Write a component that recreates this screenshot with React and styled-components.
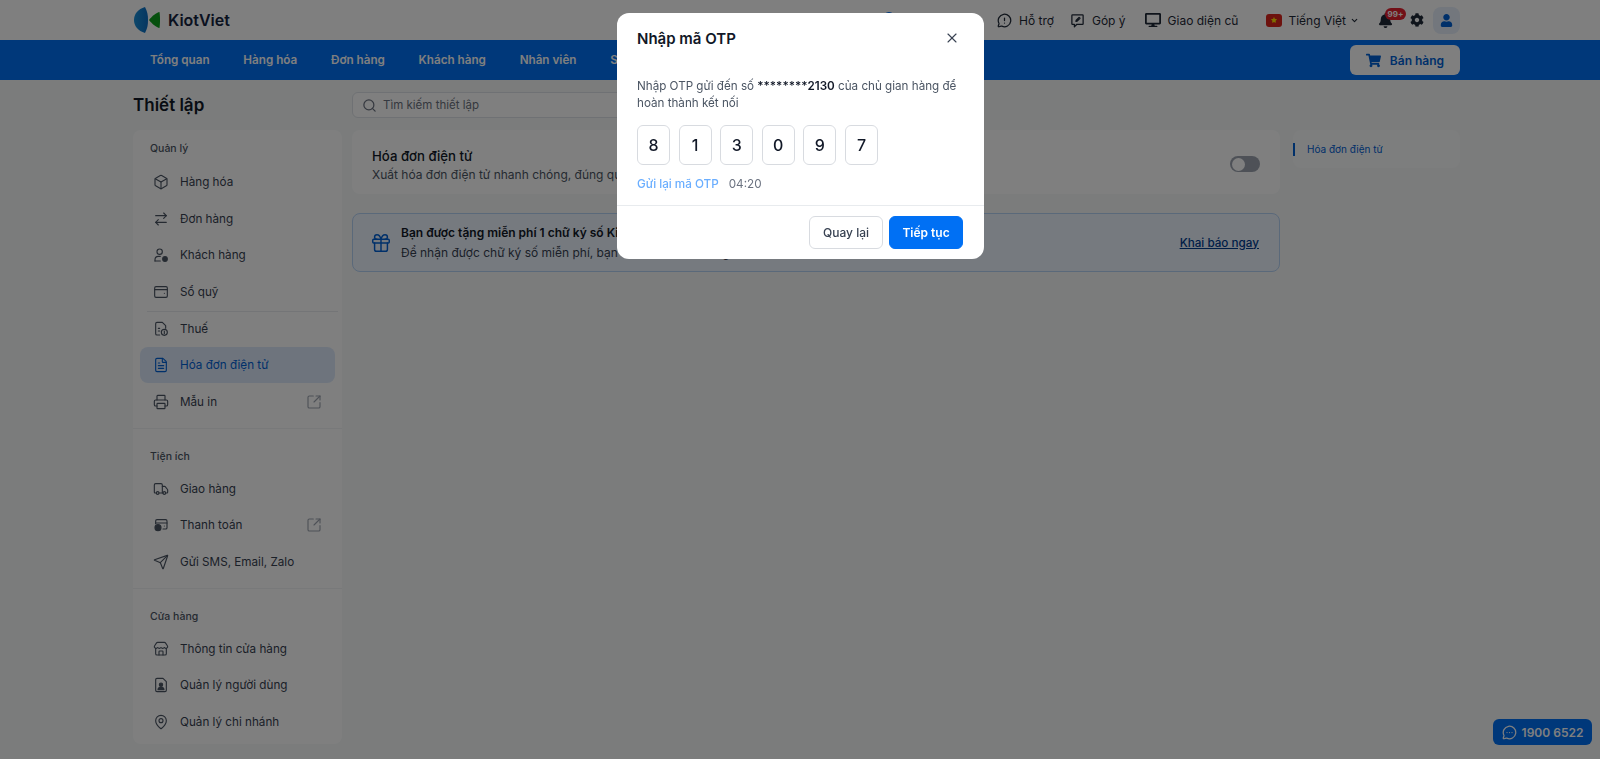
import styled, { createGlobalStyle } from "styled-components";
import {
  Box, ArrowRightLeft, FileText, Printer,
  SquareArrowOutUpRight, Truck, Send, Store, MapPin,
  Search, Gift, X, MessageCircleWarning, ChevronDown, MessageCircleMore,
} from "lucide-react";
import { FaBell, FaCog, FaUser, FaShoppingCart, FaDesktop, FaStar } from "react-icons/fa";

const GlobalStyle = createGlobalStyle`
  html, body { margin: 0; padding: 0; background: #f6f9f9; }
  * { box-sizing: border-box; }
  body { font-family: Inter, "Noto Sans", "Liberation Sans", sans-serif; color: #1f2937; }
`;

const Page = styled.div`
  height: 759px;
  overflow: hidden;
  position: relative;
`;

const Header = styled.header`
  height: 40px;
  background: #fff;
  display: flex;
  align-items: center;
  padding: 0 140px 0 133px;
`;

const Brand = styled.div`
  display: flex;
  align-items: center;
  gap: 8px;
  font-size: 16px;
  font-weight: 600;
  color: #14233f;
`;

const TopActions = styled.div`
  margin-left: auto;
  display: flex;
  align-items: center;
  gap: 16px;
  font-size: 12px;
  color: #1f2937;
`;

const TopAction = styled.div`
  display: flex;
  align-items: center;
  gap: ${p => p.$gap || 7}px;
  margin-left: ${p => p.$ml || 0}px;
`;

const HiddenIcon = styled.span`
  width: 12px;
  height: 16px;
  margin-right: 86px;
  display: block;
  background: #0070f4;
  border-radius: 6px;
`;

const Flag = styled.span`
  width: 16px;
  height: 13px;
  border-radius: 3px;
  background: #da251d;
  color: #ffde00;
  display: flex;
  align-items: center;
  justify-content: center;
`;

const BellWrap = styled.div`
  position: relative;
  display: flex;
  margin: 0 1px 0 3px;
  color: #1f2937;
`;

const Badge = styled.span`
  position: absolute;
  top: -5px;
  left: 7px;
  width: 21px;
  height: 12px;
  border-radius: 7px;
  background: #e5202e;
  color: #fff;
  font-size: 8px;
  font-weight: 700;
  display: flex;
  align-items: center;
  justify-content: center;
`;

const Avatar = styled.div`
  width: 27px;
  height: 27px;
  margin-left: -7px;
  border-radius: 8px;
  background: #e6effb;
  color: #0061d5;
  display: flex;
  align-items: center;
  justify-content: center;
`;

const Nav = styled.nav`
  height: 40px;
  background: #0070f4;
  display: flex;
  align-items: center;
  padding: 0 140px 0 150px;
`;

const NavLinks = styled.div`
  display: flex;
  gap: 33.7px;
  font-size: 11.7px;
  font-weight: 600;
  color: #fff;
`;

const SellButton = styled.button`
  margin-left: auto;
  width: 110px;
  height: 30px;
  border: none;
  border-radius: 6px;
  background: #fff;
  color: #0061d5;
  font-family: inherit;
  font-size: 12px;
  font-weight: 600;
  display: flex;
  align-items: center;
  justify-content: center;
  gap: 9px;
`;

const Content = styled.div`
  padding: 12px 140px 0 133px;
  display: grid;
  grid-template-columns: 209px 1fr 167px;
  grid-template-rows: 26px auto;
  row-gap: 12px;
`;

const PageTitle = styled.h1`
  margin: 0;
  font-size: 17px;
  font-weight: 600;
  line-height: 26px;
  color: #111827;
`;

const SearchBox = styled.div`
  grid-column: 2 / 4;
  width: 400px;
  margin-left: 10px;
  height: 26px;
  border: 1px solid #dfe3e8;
  border-radius: 6px;
  background: #fff;
  display: flex;
  align-items: center;
  gap: 6px;
  padding-left: 9px;
  font-size: 11.5px;
  color: #6b7280;
`;

const Sidebar = styled.aside`
  background: #fff;
  border-radius: 8px;
  height: 614px;
`;

const SideLabel = styled.div`
  font-size: 10.5px;
  line-height: 14px;
  font-weight: 500;
  color: #4b5563;
  margin: 0 0 8px 10px;
`;

const SideSection = styled.section`
  padding: 12px 7px 7px;
  & + & {
    border-top: 1px solid #f1f3f5;
    padding-top: 21.5px;
  }
  & + & ${SideLabel} {
    margin-bottom: 6.5px;
  }
`;

const SideItem = styled.div`
  height: 36px;
  margin-bottom: 0.67px;
  padding: 0 13px;
  display: flex;
  align-items: center;
  gap: 11px;
  border-radius: 8px;
  font-size: 11.7px;
  color: ${p => (p.$active ? "#0061d5" : "#374151")};
  background: ${p => (p.$active ? "#dce9fb" : "transparent")};
  svg { color: ${p => (p.$active ? "#0061d5" : "#4b5563")}; flex: none; }
`;

const SideDivider = styled.div`
  height: 1px;
  margin: 0 -3px -1px 7px;
  background: #e8ebee;
`;

const SideLink = styled.span`
  margin-left: auto;
  display: flex;
  svg { color: #9ca3af; }
`;

const Main = styled.main`
  margin: 0 13px 0 10px;
  display: flex;
  flex-direction: column;
  gap: 19px;
`;

const FeatureCard = styled.div`
  height: 64px;
  background: #fff;
  border-radius: 8px;
  padding: 7px 20px 0;
  display: flex;
  align-items: center;
  justify-content: space-between;
`;

const FeatureTitle = styled.div`
  font-size: 13.2px;
  font-weight: 500;
  line-height: 19px;
  color: #111827;
`;

const FeatureText = styled.div`
  font-size: 12px;
  line-height: 18px;
  color: #4b5563;
`;

const Switch = styled.div`
  width: 30px;
  height: 16px;
  margin-bottom: 3px;
  border-radius: 8px;
  background: #9ca3af;
  padding: 1.5px;
  &::before {
    content: "";
    display: block;
    width: 13px;
    height: 13px;
    border-radius: 50%;
    background: #fff;
  }
`;

const Notice = styled.div`
  height: 59px;
  background: #ecf4ff;
  border: 1px solid #b5d2f5;
  border-radius: 8px;
  padding: 0 20px 0 17px;
  display: flex;
  align-items: center;
  gap: 9px;
  svg { color: #0061d5; flex: none; }
`;

const NoticeTitle = styled.div`
  font-size: 12px;
  font-weight: 600;
  line-height: 20px;
  color: #111827;
`;

const NoticeText = styled.div`
  font-size: 12px;
  line-height: 20px;
  color: #374151;
`;

const NoticeLink = styled.a`
  margin-left: auto;
  font-size: 11.7px;
  font-weight: 500;
  color: #003c8f;
  text-decoration: underline;
`;

const Anchor = styled.div`
  height: 38px;
  background: #fbfcfc;
  border-radius: 8px;
  display: flex;
  align-items: center;
  gap: 12px;
  font-size: 10px;
  color: #0061d5;
  &::before {
    content: "";
    width: 2px;
    height: 13px;
    background: #0061d5;
  }
`;

const PhoneFab = styled.div`
  position: absolute;
  right: 8px;
  bottom: 14px;
  width: 99px;
  height: 26px;
  border-radius: 6px;
  background: #0070f4;
  color: #fff;
  font-size: 12px;
  font-weight: 600;
  display: flex;
  align-items: center;
  justify-content: center;
  gap: 5px;
`;

const Overlay = styled.div`
  position: fixed;
  inset: 0;
  background: rgba(0, 0, 0, 0.5);
`;

const Modal = styled.div`
  position: absolute;
  top: 13px;
  left: 616.5px;
  width: 367.5px;
  height: 246px;
  background: #fff;
  border-radius: 12px;
  display: flex;
  flex-direction: column;
`;

const ModalHead = styled.div`
  height: 50px;
  padding: 0 24px 0 20.5px;
  display: flex;
  align-items: center;
  justify-content: space-between;
  svg { color: #374151; }
`;

const ModalTitle = styled.h2`
  margin: 0;
  font-size: 15px;
  font-weight: 600;
  color: #111827;
`;

const ModalBody = styled.div`
  padding: 15px 20px 0 20.5px;
  flex: 1;
  border-bottom: 1px solid #e8ebee;
`;

const OtpHint = styled.p`
  margin: 0;
  font-size: 11.65px;
  line-height: 17px;
  color: #4b5563;
  b { font-weight: 600; color: #111827; }
`;

const OtpRow = styled.div`
  display: flex;
  gap: 8.6px;
  margin-top: 13px;
`;

const OtpCell = styled.div`
  width: 33px;
  height: 40px;
  border: 1px solid #d8dbe0;
  border-radius: 6px;
  display: flex;
  align-items: center;
  justify-content: center;
  font-size: 16px;
  font-weight: 500;
  color: #111827;
`;

const ResendRow = styled.div`
  display: flex;
  gap: 10px;
  margin-top: 11px;
  font-size: 11.7px;
  line-height: 16px;
`;

const Resend = styled.span`
  color: #6aaeff;
  font-weight: 500;
`;

const Timer = styled.span`
  color: #6b7280;
`;

const ModalFoot = styled.div`
  height: 53px;
  padding: 0 21px 0 20px;
  display: flex;
  align-items: center;
  justify-content: flex-end;
  gap: 6px;
`;

const ModalButton = styled.button`
  width: 74px;
  height: 33px;
  border-radius: 6px;
  font-family: inherit;
  font-size: 12px;
  font-weight: ${p => (p.$primary ? 600 : 500)};
  color: ${p => (p.$primary ? "#fff" : "#374151")};
  background: ${p => (p.$primary ? "#0070f4" : "#fff")};
  border: 1px solid ${p => (p.$primary ? "#0070f4" : "#d8dbe0")};
`;

const Logo = () => (
  <svg width="27" height="26" viewBox="0 0 27 26">
    <defs>
      <linearGradient id="lens" x1="0" y1="0" x2="1" y2="0">
        <stop offset="0" stopColor="#1a8fd6" />
        <stop offset="1" stopColor="#0b6cc2" />
      </linearGradient>
    </defs>
    <path d="M12 0 C5 2 1 7 1 13 C1 19 5 24 12 26 C14.500 21 15 18 15 13 C15 8 14.500 5 12 0 Z" fill="url(#lens)" />
    <path d="M26.500 5 C23.500 5.500 19 9 16 13 C19 17 23.500 20.500 26.500 21 C27.200 16 27.200 10 26.500 5 Z" fill="#0da01c" />
  </svg>
);

// icons the packages don't have in this exact form
const Glyph = ({ size = 16, strokeWidth = 1.7, children }) => (
  <svg width={size} height={size} viewBox="0 0 24 24" fill="none" stroke="currentColor"
    strokeWidth={strokeWidth} strokeLinecap="round" strokeLinejoin="round">
    {children}
  </svg>
);

const FeedbackIcon = props => (
  <Glyph {...props}>
    <path d="M4 3h16a1 1 0 0 1 1 1v13a1 1 0 0 1-1 1h-9l-4 4v-4H4a1 1 0 0 1-1-1V4a1 1 0 0 1 1-1z" />
    <path d="M14.500 7 10 11.500l-.5 2 2-.5L16 8.500z" />
  </Glyph>
);

const CustomerIcon = props => (
  <Glyph {...props}>
    <circle cx="10" cy="7" r="4" />
    <path d="M3 21v-2a5 5 0 0 1 5-5h3" />
    <path d="M11 21H3" />
    <circle cx="18" cy="18" r="3.500" fill="currentColor" />
  </Glyph>
);

const CashbookIcon = props => (
  <Glyph {...props}>
    <rect x="2.500" y="4" width="19" height="16" rx="2" />
    <path d="M2.500 8.500h19" />
    <path d="M17 14h.01" />
  </Glyph>
);

const TaxIcon = props => (
  <Glyph {...props}>
    <path d="M10 21H6a2 2 0 0 1-2-2V4a2 2 0 0 1 2-2h8l5 5v4" />
    <path d="M8 11h2M8 15h2" />
    <circle cx="17" cy="17" r="4.500" />
    <path d="M17 15v4" />
  </Glyph>
);

const PaymentIcon = props => (
  <Glyph {...props}>
    <path d="M4 10V6a2 2 0 0 1 2-2h13a2 2 0 0 1 2 2v10a2 2 0 0 1-2 2h-4" />
    <path d="M4 9h17" />
    <path d="M17 13.500h.01" />
    <circle cx="7.500" cy="16" r="4.500" fill="currentColor" />
  </Glyph>
);

const UsersFileIcon = props => (
  <Glyph {...props}>
    <path d="M6 2h9l5 5v13a2 2 0 0 1-2 2H6a2 2 0 0 1-2-2V4a2 2 0 0 1 2-2z" />
    <circle cx="12" cy="11.500" r="2.500" fill="currentColor" />
    <path d="M7.500 19a4.500 3.500 0 0 1 9 0z" fill="currentColor" />
  </Glyph>
);

const SMALL = { size: 16, strokeWidth: 1.7 };

const groups = [
  {
    label: "Quản lý",
    items: [
      { icon: Box, text: "Hàng hóa" },
      { icon: ArrowRightLeft, text: "Đơn hàng" },
      { icon: CustomerIcon, text: "Khách hàng" },
      { icon: CashbookIcon, text: "Sổ quỹ", dividerAfter: true },
      { icon: TaxIcon, text: "Thuế" },
      { icon: FileText, text: "Hóa đơn điện tử", active: true },
      { icon: Printer, text: "Mẫu in", external: true },
    ],
  },
  {
    label: "Tiện ích",
    items: [
      { icon: Truck, text: "Giao hàng" },
      { icon: PaymentIcon, text: "Thanh toán", external: true },
      { icon: Send, text: "Gửi SMS, Email, Zalo" },
    ],
  },
  {
    label: "Cửa hàng",
    items: [
      { icon: Store, text: "Thông tin cửa hàng" },
      { icon: UsersFileIcon, text: "Quản lý người dùng" },
      { icon: MapPin, text: "Quản lý chi nhánh" },
    ],
  },
];

const navItems = ["Tổng quan", "Hàng hóa", "Đơn hàng", "Khách hàng", "Nhân viên", "Sổ quỹ"];
const otp = ["8", "1", "3", "0", "9", "7"];

export default function App() {
  return (
    <Page>
      <GlobalStyle />
      <Header>
        <Brand><Logo />KiotViet</Brand>
        <TopActions>
          <HiddenIcon />
          <TopAction><MessageCircleWarning size={15} />Hỗ trợ</TopAction>
          <TopAction><FeedbackIcon size={15} strokeWidth={2} />Góp ý</TopAction>
          <TopAction $ml={3}><FaDesktop size={16} />Giao diện cũ</TopAction>
          <TopAction $ml={12} $gap={6}>
            <Flag><FaStar size={6} /></Flag>
            <TopAction $gap={4}>
              Tiếng Việt
              <ChevronDown size={9} strokeWidth={3} />
            </TopAction>
          </TopAction>
          <BellWrap>
            <FaBell size={15} />
            <Badge>99+</Badge>
          </BellWrap>
          <FaCog size={14} />
          <Avatar><FaUser size={13} /></Avatar>
        </TopActions>
      </Header>
      <Nav>
        <NavLinks>
          {navItems.map(item => <span key={item}>{item}</span>)}
        </NavLinks>
        <SellButton><FaShoppingCart size={15} />Bán hàng</SellButton>
      </Nav>
      <Content>
        <PageTitle>Thiết lập</PageTitle>
        <SearchBox><Search size={15} />Tìm kiếm thiết lập</SearchBox>
        <Sidebar>
          {groups.map(group => (
            <SideSection key={group.label}>
              <SideLabel>{group.label}</SideLabel>
              {group.items.map(item => (
                <div key={item.text}>
                  <SideItem $active={item.active}>
                    <item.icon {...SMALL} />
                    {item.text}
                    {item.external && <SideLink><SquareArrowOutUpRight {...SMALL} /></SideLink>}
                  </SideItem>
                  {item.dividerAfter && <SideDivider />}
                </div>
              ))}
            </SideSection>
          ))}
        </Sidebar>
        <Main>
          <FeatureCard>
            <div>
              <FeatureTitle>Hóa đơn điện tử</FeatureTitle>
              <FeatureText>Xuất hóa đơn điện tử nhanh chóng, đúng quy định</FeatureText>
            </div>
            <Switch />
          </FeatureCard>
          <Notice>
            <Gift size={22} strokeWidth={1.6} />
            <div>
              <NoticeTitle>Bạn được tặng miễn phí 1 chữ ký số KiotViet</NoticeTitle>
              <NoticeText>Để nhận được chữ ký số miễn phí, bạn cần khai báo thông tin</NoticeText>
            </div>
            <NoticeLink>Khai báo ngay</NoticeLink>
          </Notice>
        </Main>
        <Anchor>Hóa đơn điện tử</Anchor>
      </Content>
      <PhoneFab><MessageCircleMore size={15} />1900 6522</PhoneFab>
      <Overlay />
      <Modal>
        <ModalHead>
          <ModalTitle>Nhập mã OTP</ModalTitle>
          <X size={16} strokeWidth={1.6} />
        </ModalHead>
        <ModalBody>
          <OtpHint>Nhập OTP gửi đến số <b>********2130</b> của chủ gian hàng để hoàn thành kết nối</OtpHint>
          <OtpRow>
            {otp.map((digit, i) => <OtpCell key={i}>{digit}</OtpCell>)}
          </OtpRow>
          <ResendRow>
            <Resend>Gửi lại mã OTP</Resend>
            <Timer>04:20</Timer>
          </ResendRow>
        </ModalBody>
        <ModalFoot>
          <ModalButton>Quay lại</ModalButton>
          <ModalButton $primary>Tiếp tục</ModalButton>
        </ModalFoot>
      </Modal>
    </Page>
  );
}
